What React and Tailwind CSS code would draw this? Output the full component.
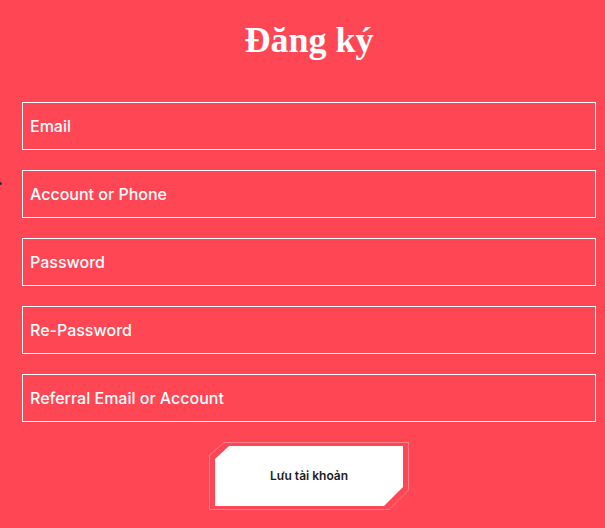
const fields = ['Email', 'Account or Phone', 'Password', 'Re-Password', 'Referral Email or Account'];

export default function App() {
  return (
    <div className="relative min-h-[528px] w-full bg-[#ff4655] font-['Inter',sans-serif]">
      <span className="absolute left-[-1px] top-[182px] h-[3px] w-[3px] rounded-full bg-[#3b2a30]" />
      <div className="pl-[22px] pr-[9px] pt-[22px]">
        <h1 className="text-center font-['Liberation_Serif',serif] text-[36px] font-bold leading-[36px] text-white">
          Đăng ký
        </h1>
        <form className="mt-[44px] flex flex-col gap-5">
          {fields.map((f) => (
            <input
              key={f}
              placeholder={f}
              className="h-12 w-full border border-white bg-transparent px-[7px] text-[16px] font-medium text-white outline-none placeholder:text-white"
            />
          ))}
          <div className="flex justify-center">
            <div className="relative h-[68px] w-[200px] bg-white/30 [clip-path:polygon(15px_0,100%_0,100%_48px,180px_100%,0_100%,0_13px)]">
              <div className="absolute inset-px bg-[#ff4655] [clip-path:polygon(14px_0,100%_0,100%_47px,179px_100%,0_100%,0_12px)]" />
              <button
                type="button"
                className="absolute left-[6px] top-[4px] flex h-[60px] w-[188px] items-center justify-center bg-white text-[12px] font-semibold text-[#1b1b23] [clip-path:polygon(14px_0,100%_0,100%_41px,169px_100%,0_100%,0_13px)]"
              >
                Lưu tài khoản
              </button>
            </div>
          </div>
        </form>
      </div>
    </div>
  );
}
